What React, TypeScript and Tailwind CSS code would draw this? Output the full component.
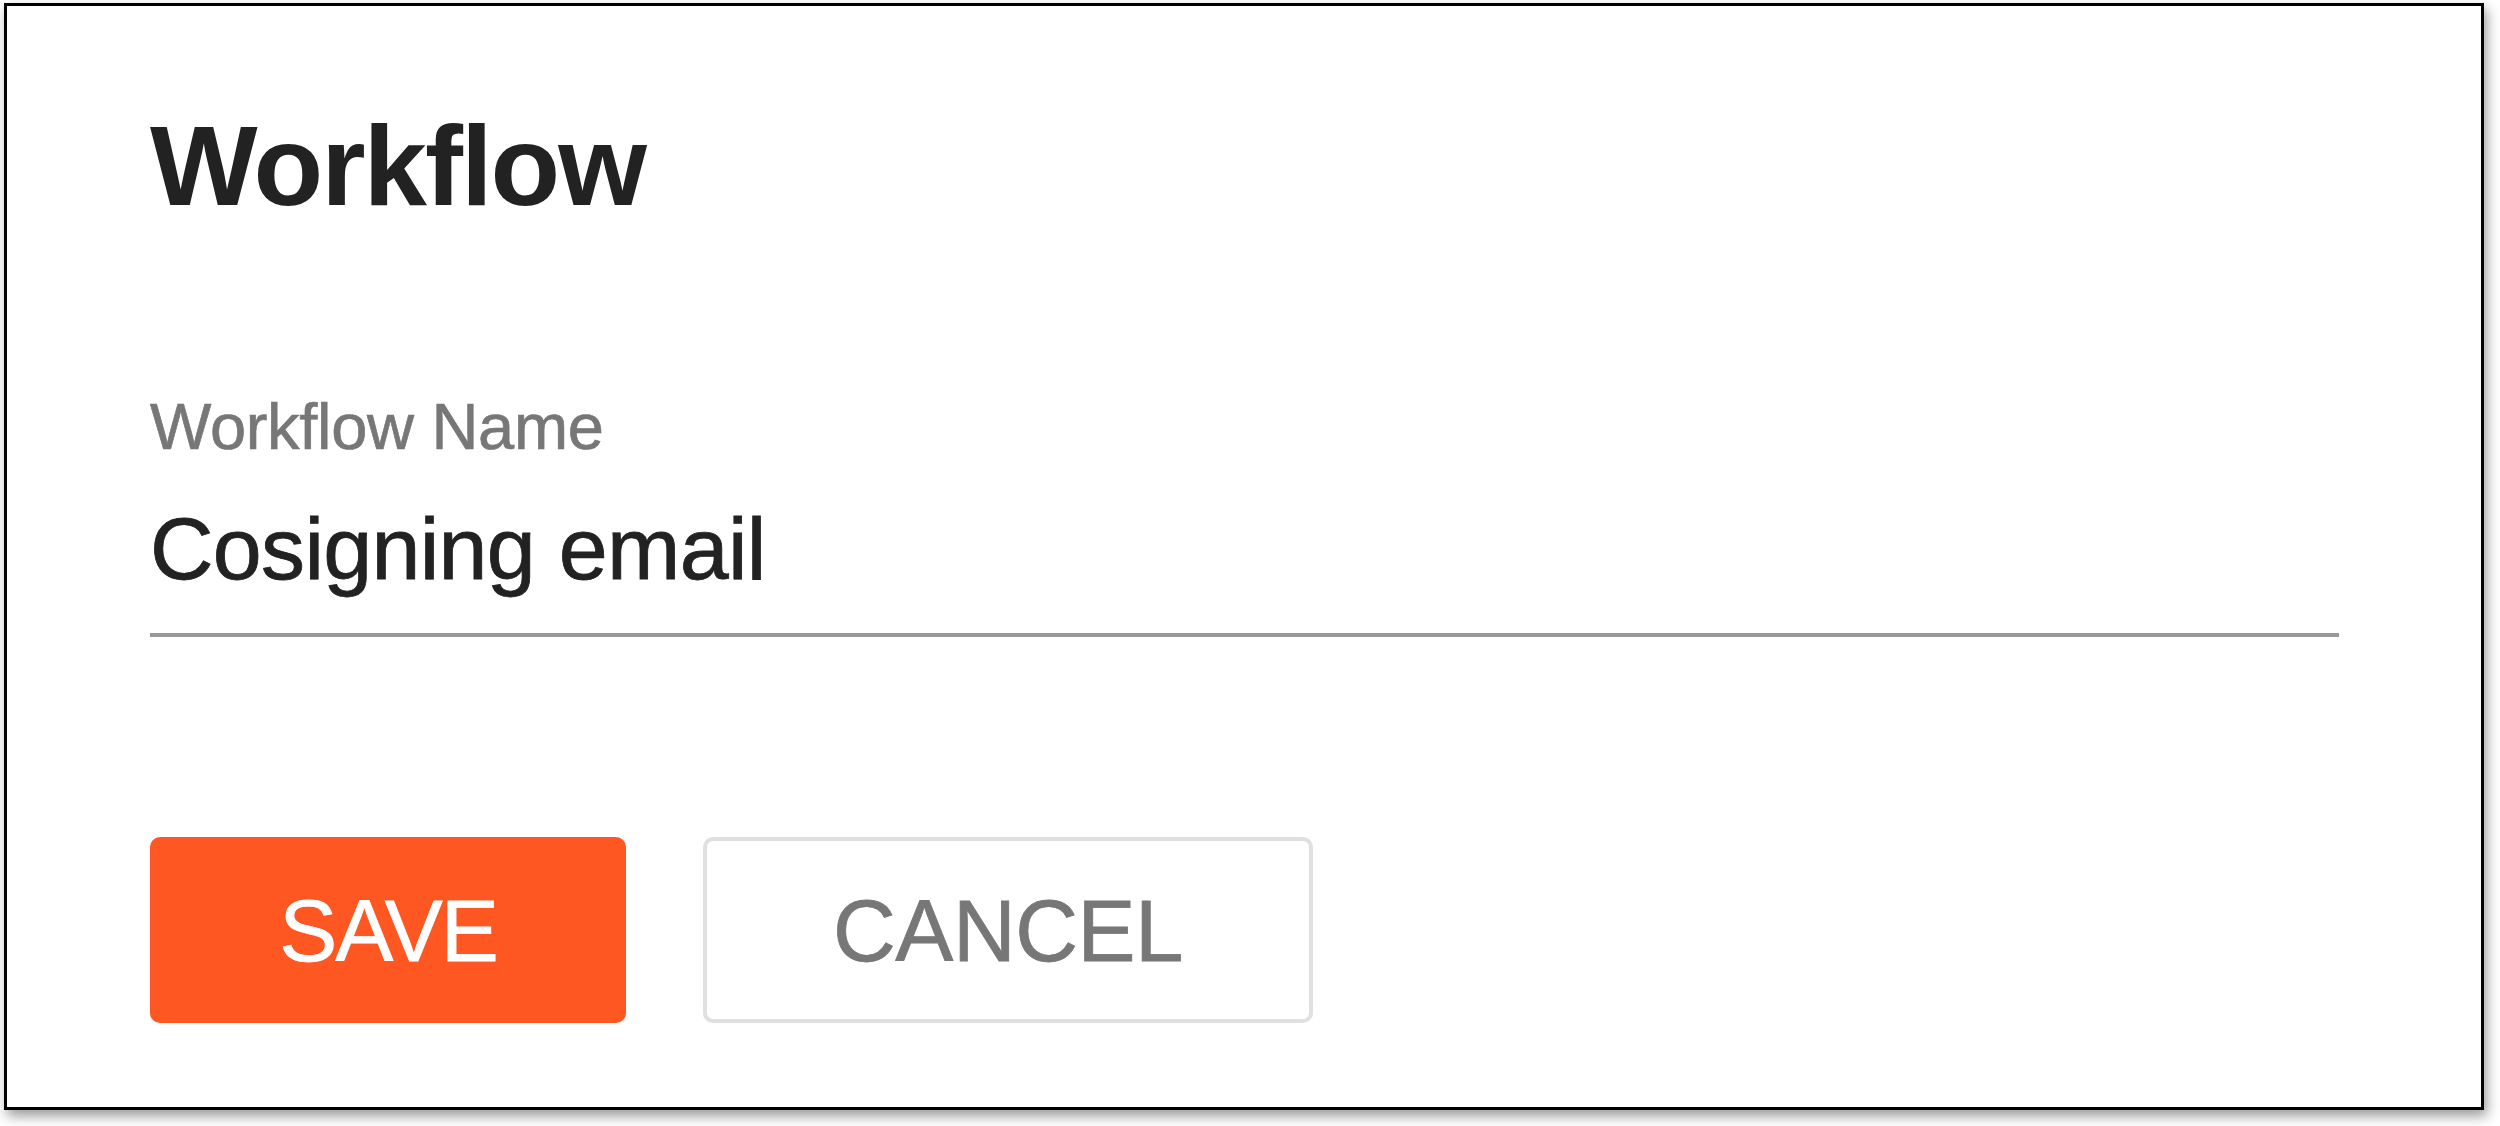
export default function App() {
    return (
        <div className="min-h-screen bg-white pt-[3px] pl-[4px]" style={{ fontFamily: '"Liberation Sans", Arial, sans-serif' }}>
            {/* Dialog frame */}
            <div className="w-[2480px] h-[1107px] border-[3px] border-black bg-white shadow-[3px_6px_12px_rgba(0,0,0,0.4)] pt-[103px] pl-[143px] flex flex-col">
                <h1 className="text-[114px] leading-none font-bold tracking-[-2px] text-[#222222]">Workflow</h1>

                {/* Name field */}
                <div className="mt-[171px] flex flex-col">
                    <label className="text-[65px] leading-none tracking-[-0.3px] text-[#777777] [-webkit-text-stroke:0.7px_#777777]">Workflow Name</label>
                    <div className="mt-[46px] text-[88px] leading-none tracking-[-0.7px] text-[#222222] [-webkit-text-stroke:0.8px_#222222]">Cosigning email</div>
                    <div className="mt-[40px] w-[2189px] h-[4px] bg-[#999999]" />
                </div>

                {/* Actions */}
                <div className="mt-[200px] flex gap-[77px]">
                    <button className="w-[476px] h-[186px] rounded-[10px] bg-[#ff5722] text-white text-[87px] leading-none tracking-[-2px] flex items-center justify-center [-webkit-text-stroke:0.8px_#ffffff]">
                        SAVE
                    </button>
                    <button className="w-[610px] h-[186px] rounded-[10px] border-[4px] border-[#e0e0e0] bg-white text-[#777777] text-[87px] leading-none tracking-[-0.5px] flex items-center justify-center [-webkit-text-stroke:0.8px_#777777]">
                        CANCEL
                    </button>
                </div>
            </div>
        </div>
    );
}
